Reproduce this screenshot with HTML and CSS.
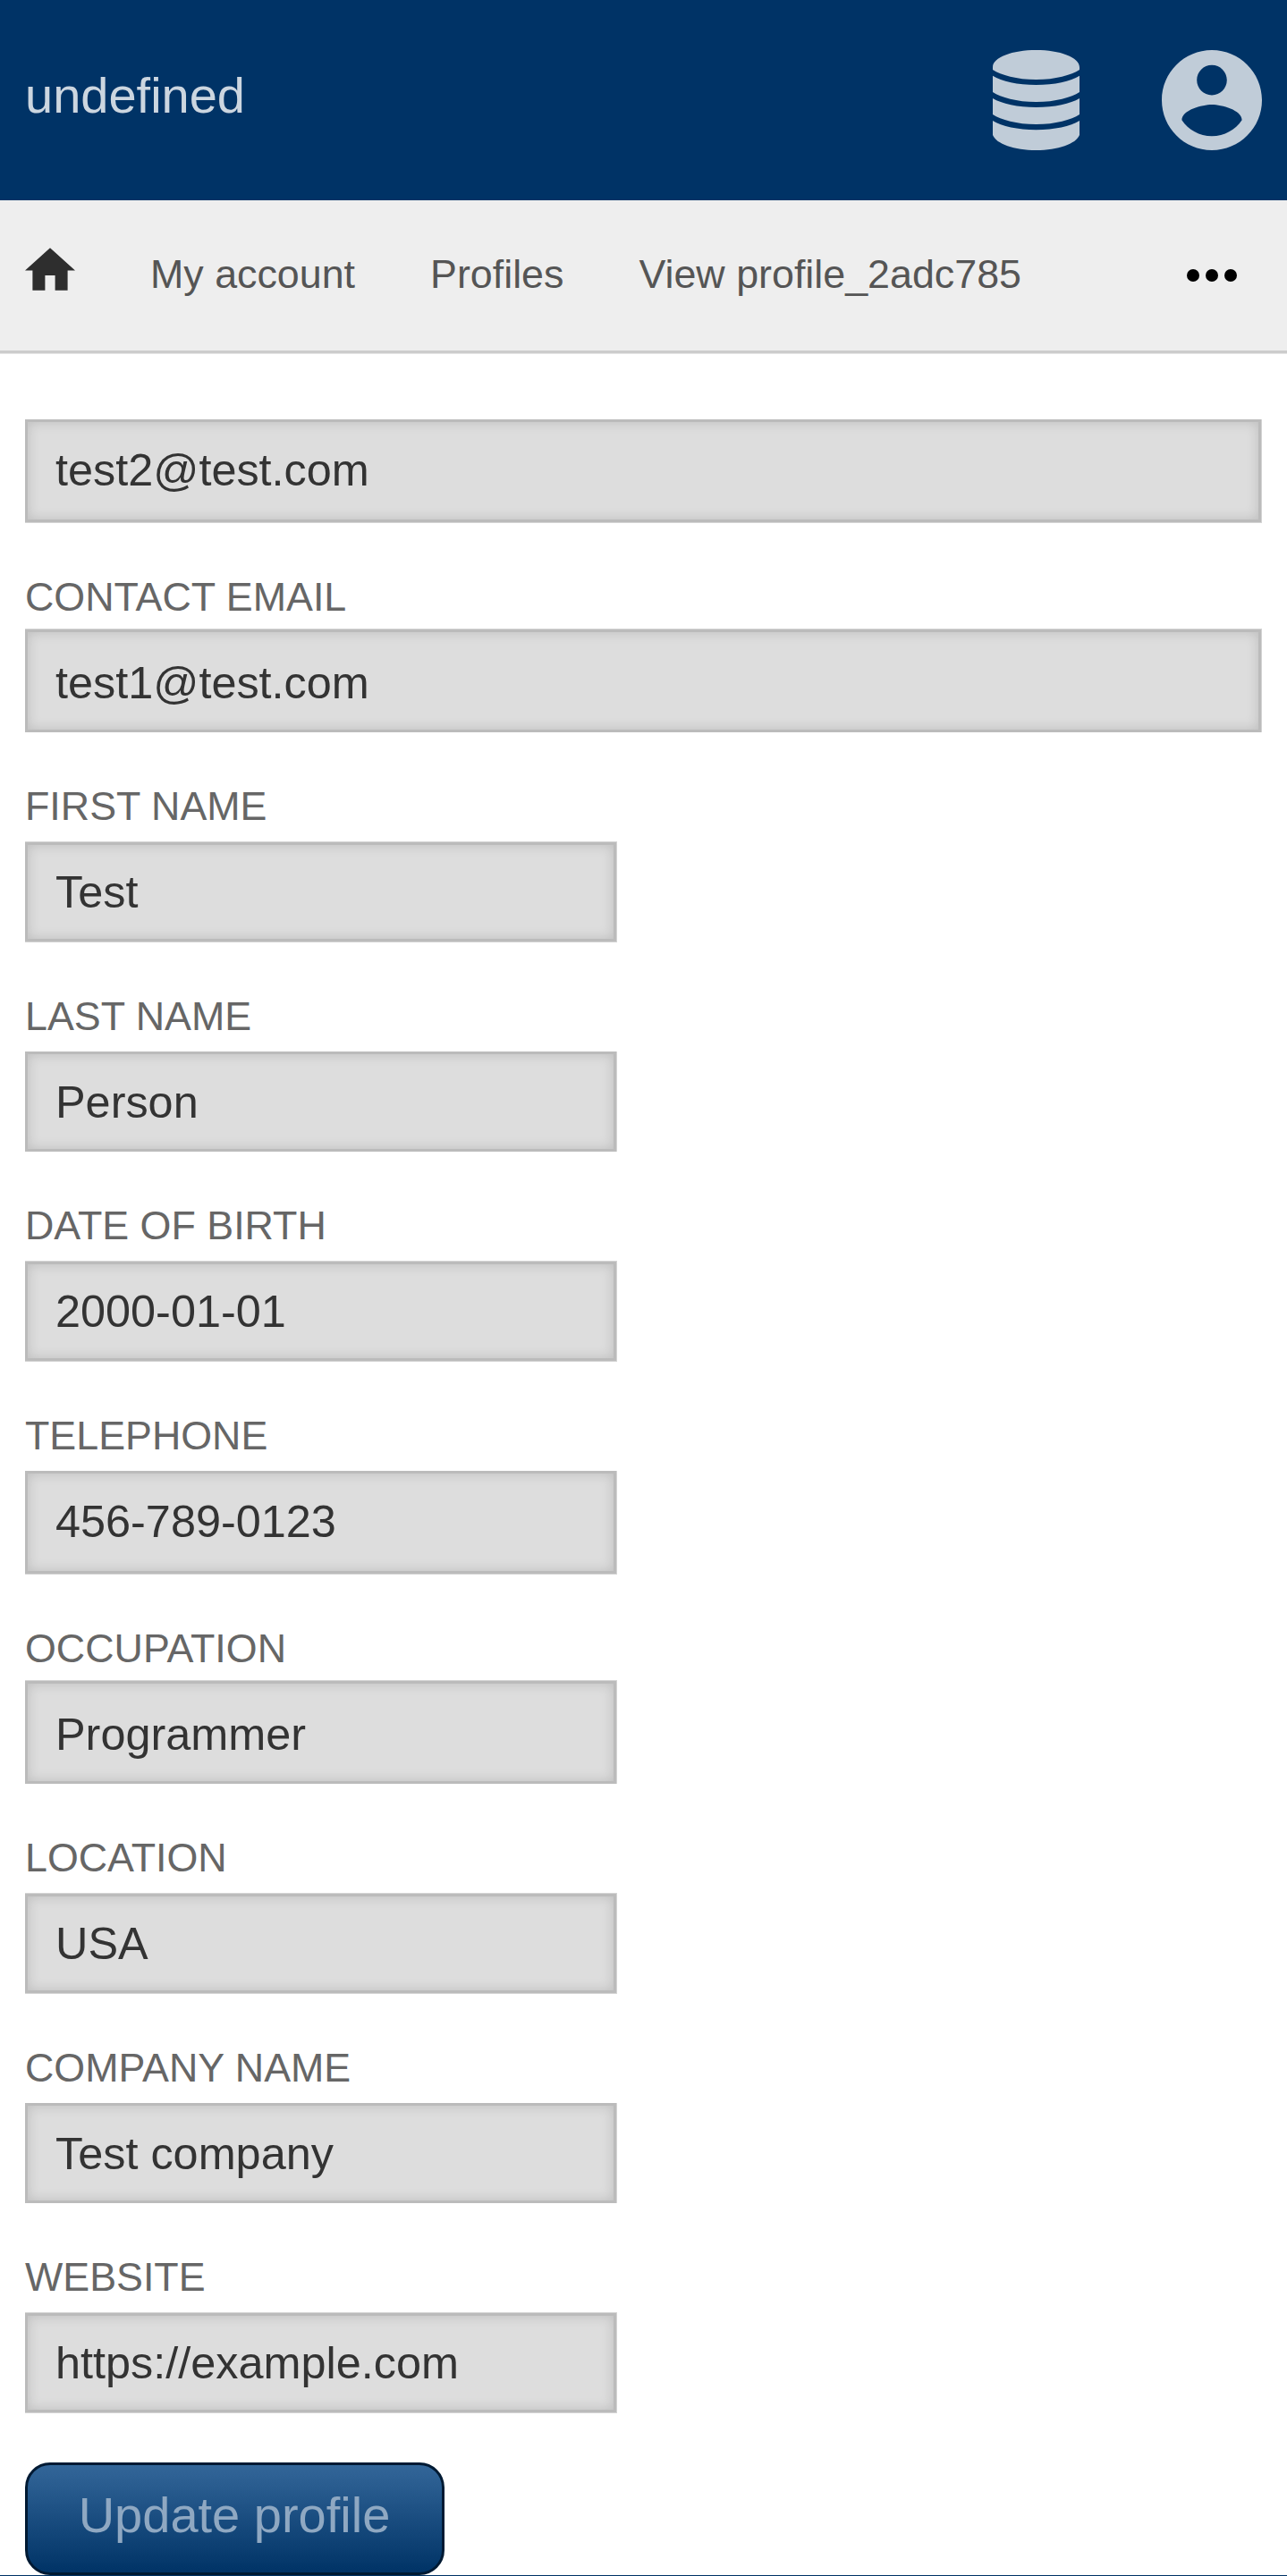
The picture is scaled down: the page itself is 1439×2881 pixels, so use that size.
FILE: index.html
```
<!DOCTYPE html>
<html lang="en">
<head>
<meta charset="utf-8">
<title>Edit profile</title>
<link rel="stylesheet" href="styles.css">
</head>
<body>
<header class="topbar">
  <span class="brand">undefined</span>
  <div class="actions">
    <svg class="icon-db" viewBox="0 0 97 112"><path d="M0 19C0 8 22 0 48.500 0S97 8 97 19V22C88 28 70 33 48.500 33S9 28 0 22ZM0 28.700C10 35 28 39 48.500 39S87 35 97 28.700V47C88 53 70 58 48.500 58S9 53 0 47ZM0 54C10 60 28 64 48.500 64S87 60 97 54V72C88 78 70 83 48.500 83S9 78 0 72ZM0 79C10 85 28 89.300 48.500 89.300S87 85 97 79V95C93 105 73 112 48.500 112S4 105 0 95Z"/></svg>
    <svg class="icon-user" viewBox="2 2 20 20"><path d="M12 2C6.480 2 2 6.480 2 12s4.480 10 10 10 10-4.480 10-10S17.520 2 12 2zm0 3c1.660 0 3 1.340 3 3s-1.340 3-3 3-3-1.340-3-3 1.340-3 3-3zm0 14.200c-2.500 0-4.710-1.280-6-3.220.030-1.990 4-3.080 6-3.080 1.990 0 5.970 1.090 6 3.080-1.290 1.940-3.500 3.220-6 3.220z"/></svg>
  </div>
</header>
<nav class="crumbs">
  <svg class="icon-home" viewBox="2 3 20 17"><path d="M10 20v-6h4v6h5v-8h3L12 3 2 12h3v8z"/></svg>
  <a>My account</a>
  <a>Profiles</a>
  <a>View profile_2adc785</a>
  <svg class="icon-more" viewBox="0 0 56 14"><circle cx="7" cy="7" r="7"/><circle cx="28" cy="7" r="7"/><circle cx="49" cy="7" r="7"/></svg>
</nav>
<form class="form">
  <div class="field wide"><input class="input tall" value="test2@test.com"></div>
  <div class="field wide"><label class="label snug">CONTACT EMAIL</label><input class="input low" value="test1@test.com"></div>
  <div class="field"><label class="label">FIRST NAME</label><input class="input both" value="Test"></div>
  <div class="field"><label class="label">LAST NAME</label><input class="input" value="Person"></div>
  <div class="field"><label class="label">DATE OF BIRTH</label><input class="input both" value="2000-01-01"></div>
  <div class="field"><label class="label">TELEPHONE</label><input class="input tall" value="456-789-0123"></div>
  <div class="field"><label class="label snug">OCCUPATION</label><input class="input low" value="Programmer"></div>
  <div class="field"><label class="label">LOCATION</label><input class="input both" value="USA"></div>
  <div class="field"><label class="label">COMPANY NAME</label><input class="input" value="Test company"></div>
  <div class="field"><label class="label">WEBSITE</label><input class="input both" value="https://example.com"></div>
  <button class="submit" type="button">Update profile</button>
</form>
<footer class="footer"></footer>
</body>
</html>
```
FILE: styles.css
```
* { box-sizing: border-box; }
body { margin: 0; height: 2881px; overflow: hidden; background: #fff; font-family: "Liberation Sans", Arial, sans-serif; }
.topbar { display: flex; justify-content: space-between; align-items: flex-start; height: 224px; padding: 0 28px; background: #003366; }
.brand { margin-top: 75px; font-size: 56px; line-height: 63px; color: #ccd6e0; }
.actions { display: flex; gap: 92px; margin-top: 56px; fill: #c0ccd8; }
.icon-db { width: 97px; height: 112px; }
.icon-user { width: 112px; height: 112px; }
.crumbs { display: flex; align-items: flex-start; height: 171px; padding: 0 56px 0 28px; background: #eee; border-bottom: 3px solid #ccc; box-shadow: 0 1px 0 #e5e5e5; font-size: 44.800px; line-height: 51px; color: #555; }
.crumbs a { margin: 57px 84px 0 0; white-space: nowrap; }
.icon-home { width: 56px; height: 48px; margin: 53px 84px 0 0; fill: #2e2e2e; }
.icon-more { width: 56px; height: 14px; margin: 77px 0 0 auto; }
.form { display: flex; flex-direction: column; align-items: flex-start; padding: 74px 28px 0; height: 2485px; }
.field { display: flex; flex-direction: column; width: 661px; }
.wide { width: 1382px; }
.label { margin: 57px 0 14px; font-size: 44.800px; line-height: 51px; color: #666; }
.snug { margin-bottom: 10px; }
.input {
  --inner: inset 0 0 14px rgba(0, 0, 0, .15);
  width: 100%; margin: 0; padding: 25px 31px 24px;
  border: 3px solid #bbb; border-radius: 0; outline: 0; background: #ddd;
  box-shadow: var(--inner), 1px 0 0 #d4d4d4;
  font: 50.400px/57px "Liberation Sans", Arial, sans-serif; color: #333;
}
.tall { padding-bottom: 27px; margin-bottom: 1px; box-shadow: var(--inner), 1px 0 0 #d4d4d4, 1px 1px 0 #d4d4d4, 0 1px 0 #d4d4d4; }
.low { padding-top: 28px; margin-top: 1px; box-shadow: var(--inner), 1px 0 0 #d4d4d4, 1px -1px 0 #d4d4d4, 0 -1px 0 #d4d4d4; }
.both { padding-top: 24px; margin: 1px 0; box-shadow: var(--inner), 1px 1px 0 #d4d4d4, 1px -1px 0 #d4d4d4, 0 1px 0 #d4d4d4, 0 -1px 0 #d4d4d4; }
.submit { width: 469px; height: 126px; margin-top: 55px; border: 3.500px solid #001a33; border-radius: 28px; background: linear-gradient(#336699, #003366); color: #8fa8c2; font: 56px/63px "Liberation Sans", Arial, sans-serif; padding: 24px 1px 33px 0; }
.footer { height: 1px; background: #003366; }
```
